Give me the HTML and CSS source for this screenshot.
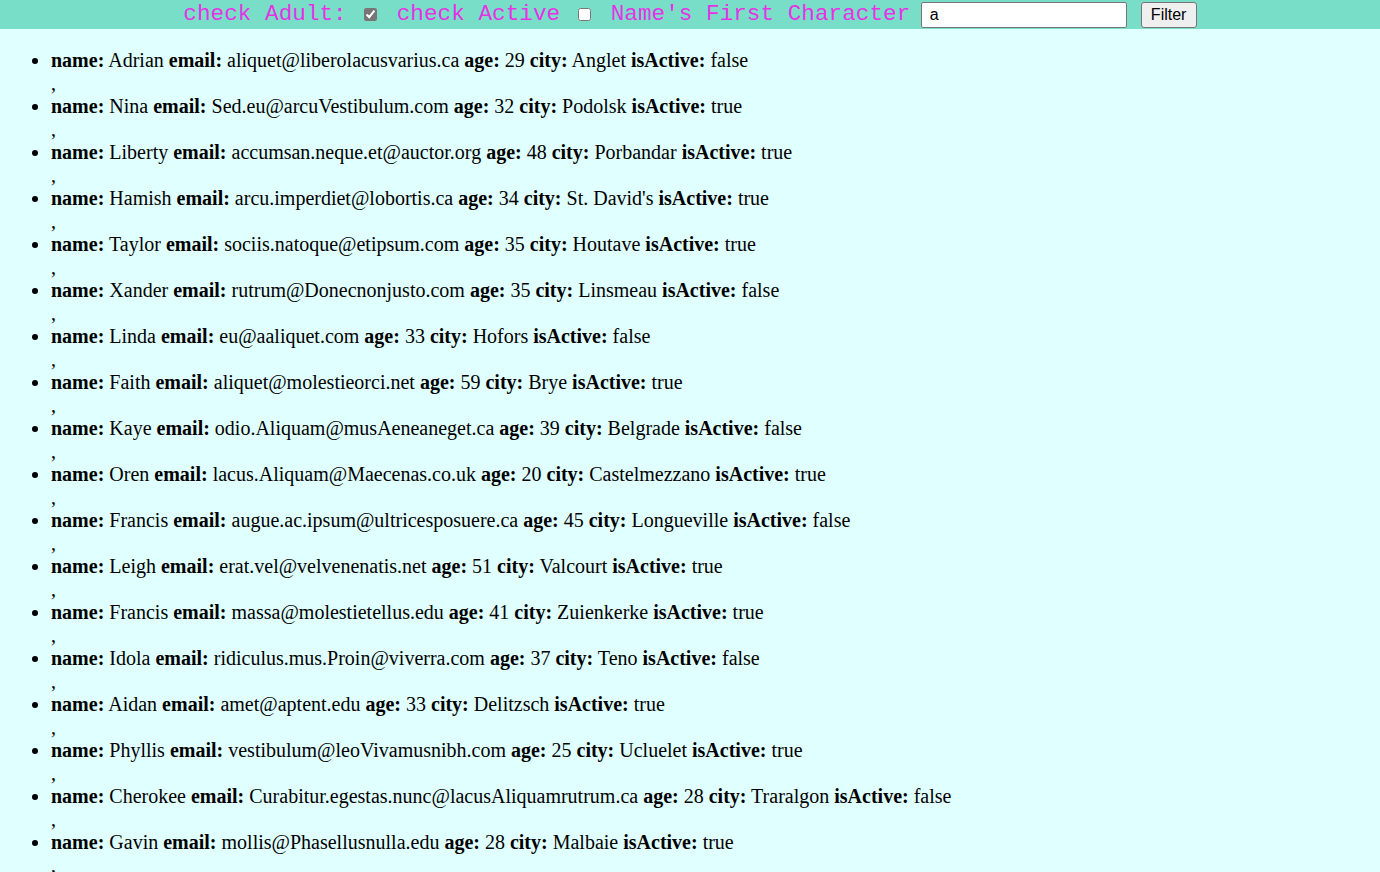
FILE: index.html
```html
<!DOCTYPE html>
<html>
<head>
<meta charset="utf-8">
<link rel="stylesheet" href="styles.css">
</head>
<body>
<header class="bar">
  <span class="lbl">check Adult:</span>
  <input class="chk chk-a" type="checkbox" checked>
  <span class="lbl">check Active</span>
  <input class="chk chk-b" type="checkbox">
  <span class="lbl">Name's First Character</span>
  <input class="txt" type="text" value="a">
  <button class="btn">Filter</button>
</header>
<ul class="list">
  <li><div><b>name:</b> Adrian <b>email:</b> aliquet@liberolacusvarius.ca <b>age:</b> 29 <b>city:</b> Anglet <b>isActive:</b> false</div><div>,</div></li>
  <li><div><b>name:</b> Nina <b>email:</b> Sed.eu@arcuVestibulum.com <b>age:</b> 32 <b>city:</b> Podolsk <b>isActive:</b> true</div><div>,</div></li>
  <li><div><b>name:</b> Liberty <b>email:</b> accumsan.neque.et@auctor.org <b>age:</b> 48 <b>city:</b> Porbandar <b>isActive:</b> true</div><div>,</div></li>
  <li><div><b>name:</b> Hamish <b>email:</b> arcu.imperdiet@lobortis.ca <b>age:</b> 34 <b>city:</b> St. David's <b>isActive:</b> true</div><div>,</div></li>
  <li><div><b>name:</b> Taylor <b>email:</b> sociis.natoque@etipsum.com <b>age:</b> 35 <b>city:</b> Houtave <b>isActive:</b> true</div><div>,</div></li>
  <li><div><b>name:</b> Xander <b>email:</b> rutrum@Donecnonjusto.com <b>age:</b> 35 <b>city:</b> Linsmeau <b>isActive:</b> false</div><div>,</div></li>
  <li><div><b>name:</b> Linda <b>email:</b> eu@aaliquet.com <b>age:</b> 33 <b>city:</b> Hofors <b>isActive:</b> false</div><div>,</div></li>
  <li><div><b>name:</b> Faith <b>email:</b> aliquet@molestieorci.net <b>age:</b> 59 <b>city:</b> Brye <b>isActive:</b> true</div><div>,</div></li>
  <li><div><b>name:</b> Kaye <b>email:</b> odio.Aliquam@musAeneaneget.ca <b>age:</b> 39 <b>city:</b> Belgrade <b>isActive:</b> false</div><div>,</div></li>
  <li><div><b>name:</b> Oren <b>email:</b> lacus.Aliquam@Maecenas.co.uk <b>age:</b> 20 <b>city:</b> Castelmezzano <b>isActive:</b> true</div><div>,</div></li>
  <li><div><b>name:</b> Francis <b>email:</b> augue.ac.ipsum@ultricesposuere.ca <b>age:</b> 45 <b>city:</b> Longueville <b>isActive:</b> false</div><div>,</div></li>
  <li><div><b>name:</b> Leigh <b>email:</b> erat.vel@velvenenatis.net <b>age:</b> 51 <b>city:</b> Valcourt <b>isActive:</b> true</div><div>,</div></li>
  <li><div><b>name:</b> Francis <b>email:</b> massa@molestietellus.edu <b>age:</b> 41 <b>city:</b> Zuienkerke <b>isActive:</b> true</div><div>,</div></li>
  <li><div><b>name:</b> Idola <b>email:</b> ridiculus.mus.Proin@viverra.com <b>age:</b> 37 <b>city:</b> Teno <b>isActive:</b> false</div><div>,</div></li>
  <li><div><b>name:</b> Aidan <b>email:</b> amet@aptent.edu <b>age:</b> 33 <b>city:</b> Delitzsch <b>isActive:</b> true</div><div>,</div></li>
  <li><div><b>name:</b> Phyllis <b>email:</b> vestibulum@leoVivamusnibh.com <b>age:</b> 25 <b>city:</b> Ucluelet <b>isActive:</b> true</div><div>,</div></li>
  <li><div><b>name:</b> Cherokee <b>email:</b> Curabitur.egestas.nunc@lacusAliquamrutrum.ca <b>age:</b> 28 <b>city:</b> Traralgon <b>isActive:</b> false</div><div>,</div></li>
  <li><div><b>name:</b> Gavin <b>email:</b> mollis@Phasellusnulla.edu <b>age:</b> 28 <b>city:</b> Malbaie <b>isActive:</b> true</div><div>,</div></li>
</ul>
</body>
</html>
```
FILE: styles.css
```css
html {
  background: #e0ffff;
}
body {
  margin: 0;
  background: #e0ffff;
  font-family: "Liberation Serif", serif;
  font-size: 20px;
  color: #000;
}
.bar {
  display: flex;
  justify-content: center;
  align-items: center;
  height: 29px;
  background: #78dec8;
}
.lbl {
  font-family: "Liberation Mono", monospace;
  font-size: 22.7px;
  color: #e632e6;
  white-space: pre;
  line-height: 29px;
}
.chk {
  width: 13px;
  height: 13px;
  margin: 0;
  accent-color: #767676;
}
.chk-a {
  margin-left: 17px;
  margin-right: 20px;
}
.chk-b {
  margin-left: 17.6px;
  margin-right: 20px;
}
.txt {
  box-sizing: border-box;
  width: 206px;
  height: 26px;
  margin: 0 0 0 10.4px;
  padding: 1px 8px;
  border: 1px solid #767676;
  border-radius: 2px;
  background: #fff;
  font-family: "Liberation Sans", Arial, sans-serif;
  font-size: 16px;
  color: #000;
}
.btn {
  box-sizing: border-box;
  width: 56px;
  height: 26px;
  margin: 0 0 0 14px;
  padding: 0;
  border: 1px solid #767676;
  border-radius: 3px;
  background: #efefef;
  font-family: "Liberation Sans", Arial, sans-serif;
  font-size: 16px;
  color: #000;
}
.list {
  margin: 20px 0 0;
  padding-left: 51px;
  line-height: 23px;
}
```
